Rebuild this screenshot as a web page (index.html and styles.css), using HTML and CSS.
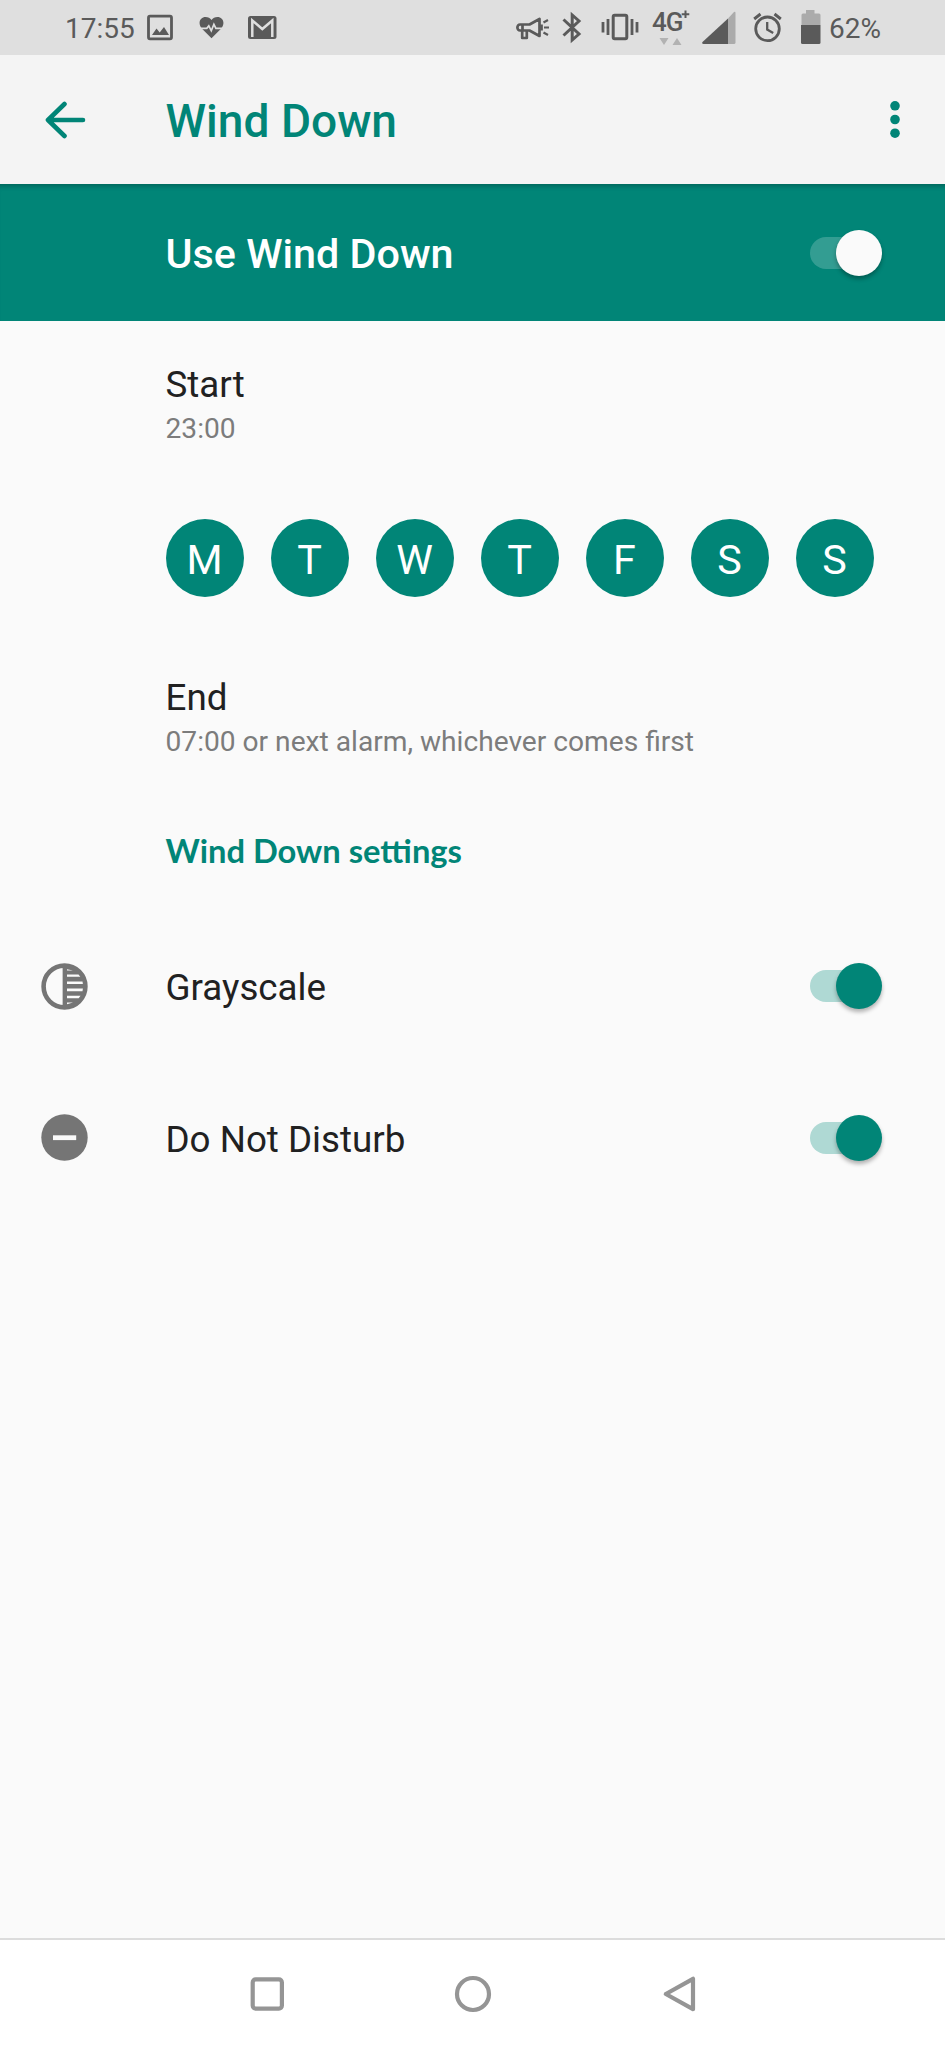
FILE: index.html
```html
<!DOCTYPE html>
<html lang="en">
<head>
<meta charset="utf-8">
<title>Wind Down</title>
<link rel="stylesheet" href="styles.css">
</head>
<body>
<div class="screen">
  <header class="status">
    <span class="status-text clock">17:55</span>
    <svg class="i-image" width="26" height="55" viewBox="147 0 26 55"><rect x="148.5" y="16.2" width="23" height="22.6" rx="1.5" fill="none" stroke="#5a5a5a" stroke-width="2.8"/><path d="M152 35l4.5-6.5 3.2 4 4.3-5.5 5 8z" fill="#5a5a5a"/></svg>
    <svg class="i-heart" width="25" height="55" viewBox="198.500 0 25 55"><path d="M211 38.200l-9.500-9.500C196.500 23 200 17 205 17q4 0 6 3 2-3 6-3c5 0 8.500 6 3.500 11.700z" fill="#5a5a5a"/><path d="M199 28.300h7.300l2-2.500 2.500 5 2.600-6.500 2 4h7.600" fill="none" stroke="#dfdfdf" stroke-width="1.700"/></svg>
    <svg class="i-mail" width="29" height="55" viewBox="247.500 0 29 55"><rect x="247.500" y="16" width="28.500" height="23" rx="2.500" fill="#5a5a5a"/><path d="M251.800 37V20.500l10 8.500 10-8.500V37" fill="none" stroke="#dfdfdf" stroke-width="2.500"/></svg>
    <div class="spacer"></div>
    <svg class="i-horn" width="34" height="55" viewBox="515.500 0 34 55"><g fill="none" stroke="#5a5a5a" stroke-width="2.700" stroke-linejoin="round"><path d="M519.500 24.500h9.500l10-5.500v17l-10-5.500h-9.500a2.600 3 0 0 1 0-6z"/><path d="M521.700 30.500v7.500h4.600v-7.500M522 24.500v6M541 24.500v6"/><path d="M543.500 27.500h5M543 22.500l4.500-2.500M543 32.500l4.500 2.500" stroke-width="2.200"/></g></svg>
    <svg class="i-bt" width="20" height="55" viewBox="562 0 20 55"><path d="M563.500 19.500l15.500 14.500-6.800 6V15l6.800 6-15.500 14.500" fill="none" stroke="#5a5a5a" stroke-width="3"/></svg>
    <svg class="i-vib" width="38" height="55" viewBox="600.500 0 38 55"><rect x="612.700" y="15.200" width="13.600" height="23.600" rx="1.500" fill="none" stroke="#5a5a5a" stroke-width="3"/><path d="M602.500 22v10.500M607.500 19v16M631.500 19v16M636.500 22v10.500" stroke="#5a5a5a" stroke-width="2.800"/></svg>
    <div class="network"><span class="network-type">4G</span>
      <svg class="network-marks" width="38" height="55" viewBox="652 0 38 55"><path d="M685.500 10.500v7.500M681.700 14.200h7.600" stroke="#5a5a5a" stroke-width="2"/><path d="M659.500 38h9l-4.500 7zM672.500 45h9l-4.500-7z" fill="#b2b2b2"/></svg>
    </div>
    <svg class="i-signal" width="34" height="55" viewBox="702 0 34 55"><path d="M728 18.500l6-6.500q1.500-1 1.500 1v29.500q0 1.500-1.500 1.500h-6z" fill="#ababab"/><path d="M728 18.500V44h-24.500q-2-.5-1-2z" fill="#5a5a5a"/></svg>
    <svg class="i-alarm" width="29" height="55" viewBox="753 0 29 55"><g fill="none" stroke="#5a5a5a"><circle cx="767.500" cy="28.800" r="11.800" stroke-width="2.800"/><path d="M767.200 22v7.500l6 3.500" stroke-width="2.300"/><path d="M754.200 19l6.300-5M774.500 14l6.300 5" stroke-width="2.900"/></g></svg>
    <svg class="i-batt" width="20" height="55" viewBox="800.500 0 20 55"><path d="M801 25V15q0-1.500 1.500-1.500h3V10h8.500v3.500h4.500q1.500 0 1.500 1.500v10z" fill="#ababab"/><path d="M800.500 25h19.500v17.500q0 1.500-1.500 1.500h-16.500q-1.500 0-1.500-1.500z" fill="#5a5a5a"/></svg>
    <span class="status-text percent">62%</span>
  </header>
  <div class="toolbar">
    <svg class="back" width="42" height="38" viewBox="44 100 42 38"><path d="M83 119H48M64.500 103L48 119l16.500 16" fill="none" stroke="#018577" stroke-width="4.600" stroke-linecap="round" stroke-linejoin="round"/></svg>
    <h1 class="title">Wind Down</h1>
    <svg class="more" width="12" height="40" viewBox="0 0 12 40"><g fill="#018577"><circle cx="6" cy="5.800" r="4.800"/><circle cx="6" cy="19.500" r="4.800"/><circle cx="6" cy="33.200" r="4.800"/></g></svg>
  </div>
  <div class="banner">
    <span class="banner-label">Use Wind Down</span>
    <span class="switch light"><span class="thumb"></span></span>
  </div>
  <main class="content">
    <section class="item start"><div class="name">Start</div><div class="sub">23:00</div></section>
    <div class="days">
      <span class="day">M</span><span class="day">T</span><span class="day">W</span><span class="day">T</span><span class="day">F</span><span class="day">S</span><span class="day">S</span>
    </div>
    <section class="item end"><div class="name">End</div><div class="sub">07:00 or next alarm, whichever comes first</div></section>
    <h2 class="heading">Wind Down settings</h2>
    <div class="row">
      <svg class="row-icon" width="47" height="47" viewBox="0 0 47 47"><circle cx="23.500" cy="23.500" r="20.900" fill="none" stroke="#757575" stroke-width="4.600"/><path d="M21.600 2h3.800c13 1 20 11 20 21.500s-7 20.500-20 21.500h-3.800z" fill="#757575"/><path d="M26 6.200l6 1.300H26zM26 11.500h11.500l1.800 2.300H26zM26 18.500h15.500l.4 2.500H26zM26 25.600h15.900l-.4 2.600H26zM26 32.700h13.500l-1.800 2.500H26zM26 39.400h6l-6 1.800z" fill="#fafafa"/></svg>
      <span class="name row-name">Grayscale</span>
      <span class="switch"><span class="thumb"></span></span>
    </div>
    <div class="row">
      <svg class="row-icon" width="47" height="47" viewBox="0 0 47 47"><circle cx="23.500" cy="23.500" r="23.200" fill="#757575"/><path d="M12 23.700h23.200" stroke="#fafafa" stroke-width="4.800"/></svg>
      <span class="name row-name">Do Not Disturb</span>
      <span class="switch"><span class="thumb"></span></span>
    </div>
  </main>
  <nav class="navbar">
    <svg width="34" height="38" viewBox="250 1974 34 38"><rect x="252.700" y="1978.400" width="29.200" height="29.200" rx="3" fill="none" stroke="#959595" stroke-width="4.200"/></svg>
    <svg width="38" height="38" viewBox="454 1974 38 38"><circle cx="473" cy="1993" r="16" fill="none" stroke="#959595" stroke-width="4.200"/></svg>
    <svg width="34" height="38" viewBox="661 1974 34 38"><path d="M692 1977.800v30.400L664.800 1993z" fill="none" stroke="#959595" stroke-width="4.200" stroke-linejoin="round"/></svg>
  </nav>
</div>
</body>
</html>
```
FILE: styles.css
```css
* { box-sizing: border-box; }
body { margin: 0; font-family: Roboto, "Liberation Sans", sans-serif; background: #fafafa; }
svg { display: block; flex: none; }
.screen { width: 945px; height: 2048px; display: flex; flex-direction: column; overflow: hidden; }

.status { height: 55px; flex: none; display: flex; align-items: center; background: #dfdfdf; padding: 0 65px 0 65px; color: #5a5a5a; }
.status-text { font-size: 28px; line-height: 32px; padding-top: 3px; white-space: nowrap; }
.clock { width: 82px; }
.i-heart { margin-left: 25.5px; }
.i-mail { margin-left: 24px; }
.spacer { flex: 1; }
.i-bt { margin-left: 12.5px; }
.i-vib { margin-left: 18.5px; }
.network { position: relative; width: 38px; height: 55px; margin-left: 13.5px; }
.network-type { display: block; font-size: 26px; font-weight: 500; line-height: 30px; padding-top: 7px; letter-spacing: -1px; }
.network-marks { position: absolute; left: 0; top: 0; }
.i-signal { margin-left: 12px; }
.i-alarm { margin-left: 17px; }
.i-batt { margin-left: 18.5px; }
.percent { width: 51px; margin-left: 8.5px; }

.toolbar { height: 129px; flex: none; display: flex; align-items: center; background: #f4f4f4; padding-left: 44px; padding-right: 44.5px; }
.title { flex: 1; margin: 0 0 0 79.5px; padding-top: 2px; font-size: 46.1px; line-height: 54px; font-weight: 500; color: #018577; }

.banner { height: 137px; flex: none; display: flex; align-items: center; justify-content: space-between; background: #018577; padding: 0 63px 0 165.5px; box-shadow: inset 0 6px 5px -4px rgba(0, 0, 0, .25); }
.banner-label { padding-top: 3px; font-size: 41.3px; line-height: 48px; font-weight: 500; color: #fff; }

.switch { width: 73px; height: 46px; flex: none; display: flex; align-items: center; justify-content: flex-end; position: relative; }
.switch::before { content: ""; position: absolute; left: 1px; top: 7px; width: 60px; height: 32px; border-radius: 16px; background: #afd9d4; }
.switch.light::before { background: #339d92; }
.thumb { position: relative; width: 46px; height: 46px; border-radius: 50%; background: #018577; box-shadow: 0 3px 4px rgba(0, 0, 0, .3); }
.light .thumb { background: #fafafa; }

.content { flex: 1; display: flex; flex-direction: column; }
.item { padding-left: 165.5px; }
.start { padding-top: 42px; }
.end { padding-top: 79px; }
.name { font-size: 36.75px; line-height: 43.6px; color: #212121; }
.sub { font-size: 28.15px; line-height: 43.6px; color: #7c7c7c; }
.days { display: flex; gap: 27px; margin-top: 68.8px; padding-left: 165.5px; }
.day { width: 78px; height: 78px; border-radius: 50%; background: #018577; color: #fff; display: flex; align-items: center; justify-content: center; font-size: 41.3px; line-height: 48px; padding-top: 5px; }
.heading { margin: 67.3px 0 38px; padding-left: 165.5px; font-family: Lato, Roboto, sans-serif; font-size: 32.7px; line-height: 42px; font-weight: 700; color: #018577; }
.row { height: 151.4px; display: flex; align-items: center; padding: 0 63px 0 41px; }
.row-name { flex: 1; margin-left: 77.5px; padding-top: 4px; }

.navbar { height: 110px; flex: none; display: flex; align-items: center; border-top: 2px solid #dcdcdc; background: #fff; padding-left: 250px; padding-bottom: 1px; gap: 170px; }
```
